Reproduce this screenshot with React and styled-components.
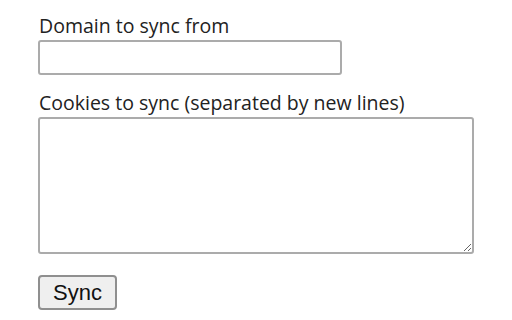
import React from 'react';
import styled, { createGlobalStyle } from 'styled-components';

const GlobalStyle = createGlobalStyle`
  html, body {
    margin: 0;
    padding: 0;
    background: #ffffff;
  }
`;

const Page = styled.form`
  display: flex;
  flex-direction: column;
  align-items: flex-start;
  padding: 14px 38px 0 38px;
  font-family: 'Open Sans', 'Noto Sans', sans-serif;
  color: #222;
`;

const Field = styled.div`
  display: flex;
  flex-direction: column;
  align-items: flex-start;
  margin-bottom: ${(p) => p.gap}px;
`;

const Label = styled.label`
  font-size: 19.5px;
  line-height: 24px;
  padding-left: 1px;
  margin-bottom: 2px;
`;

const TextInput = styled.input`
  box-sizing: border-box;
  width: 304px;
  height: 35px;
  border: 2px solid #ababab;
  border-radius: 3px;
  background: #fff;
  outline: none;
`;

const TextArea = styled.textarea`
  box-sizing: border-box;
  width: 436px;
  height: 137px;
  border: 2px solid #ababab;
  border-radius: 3px;
  background: #fff;
  outline: none;
  resize: both;
`;

const Button = styled.button`
  box-sizing: border-box;
  width: 79px;
  height: 35px;
  padding: 0;
  font-family: 'Liberation Sans', Arial, sans-serif;
  font-size: 22px;
  color: #111;
  background: #efefef;
  border: 2px solid #8f8f8f;
  border-radius: 4px;
`;

export default function App() {
  return (
    <>
      <GlobalStyle />
      <Page onSubmit={(e) => e.preventDefault()}>
        <Field gap={16}>
          <Label htmlFor="domain">Domain to sync from</Label>
          <TextInput id="domain" type="text" />
        </Field>
        <Field gap={21}>
          <Label htmlFor="cookies">Cookies to sync (separated by new lines)</Label>
          <TextArea id="cookies" />
        </Field>
        <Button type="submit">Sync</Button>
      </Page>
    </>
  );
}
